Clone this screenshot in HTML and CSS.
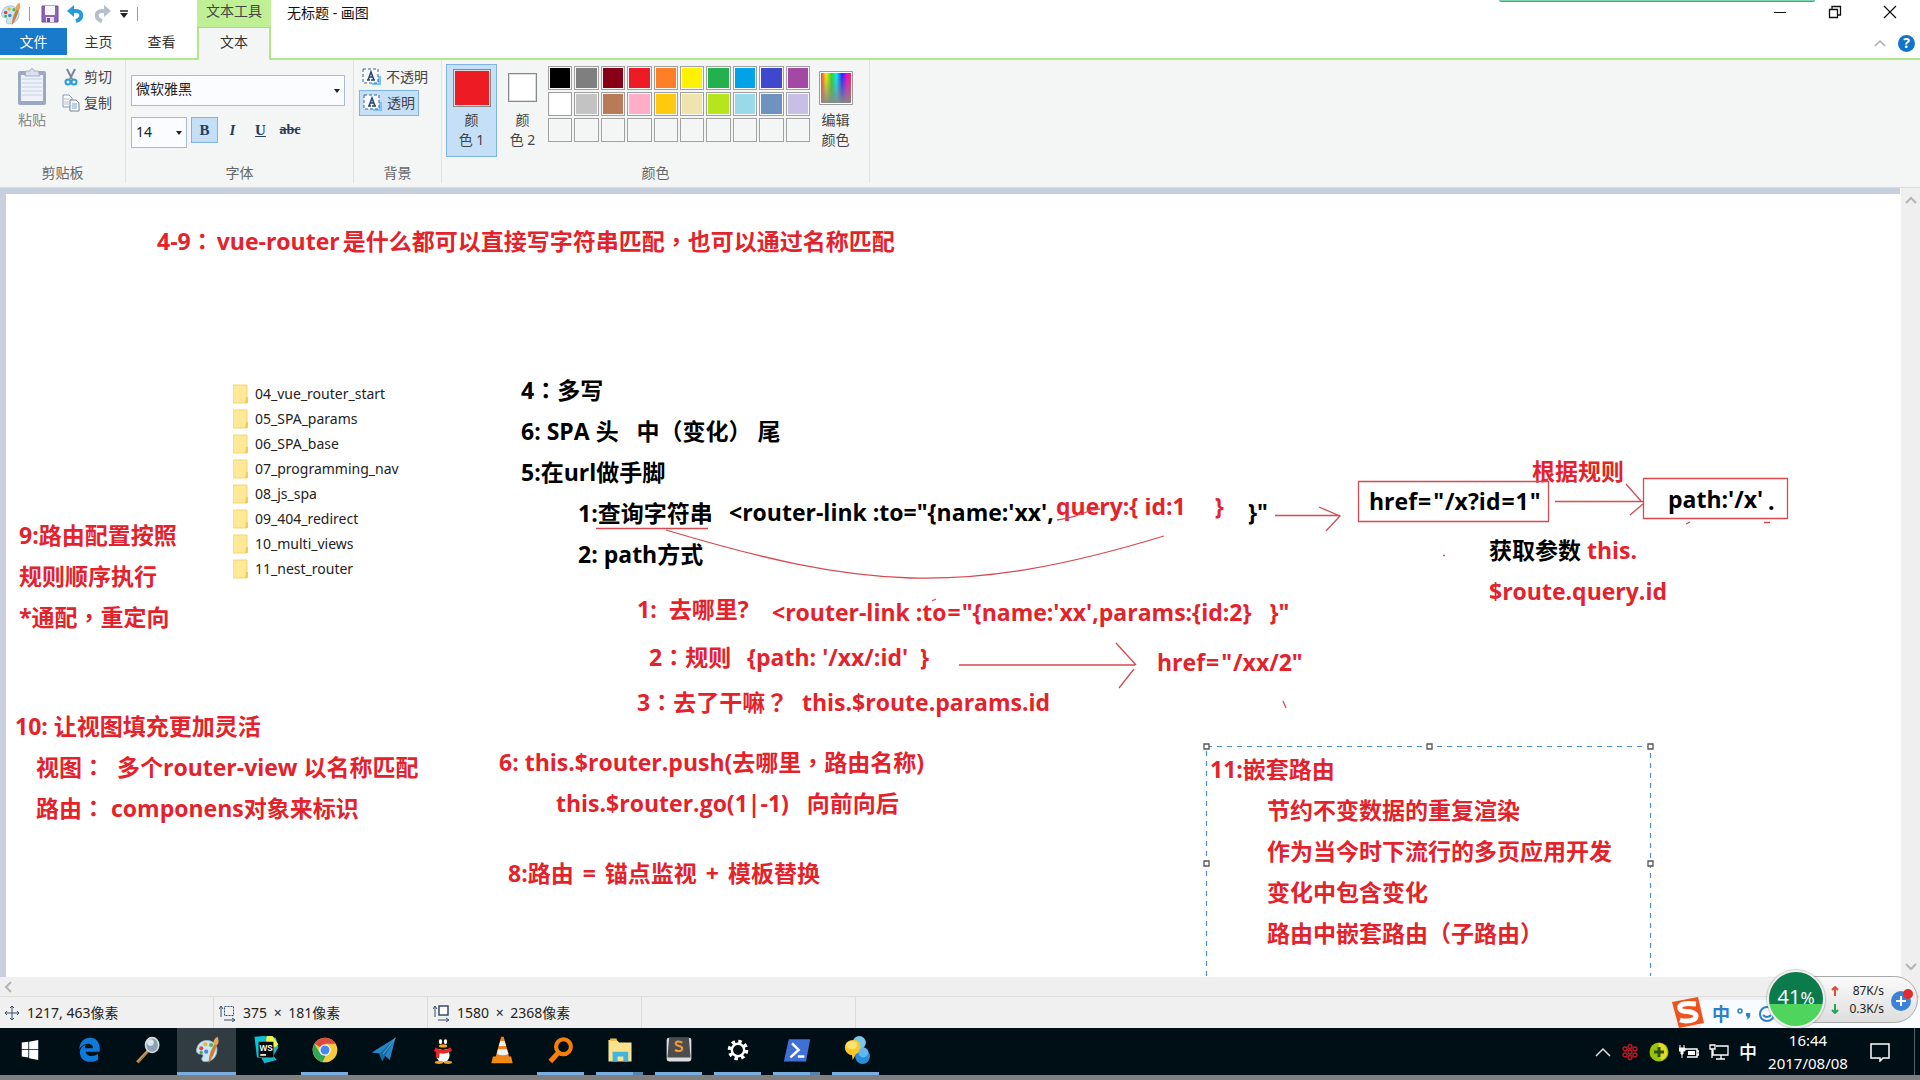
FILE: index.html
```html
<!DOCTYPE html>
<html lang="zh-CN">
<head>
<meta charset="utf-8">
<title>无标题 - 画图</title>
<link rel="stylesheet" href="styles.css">
</head>
<body>
<svg class="defs" aria-hidden="true">
  <defs>
    <linearGradient id="rainbow"><stop offset="0" stop-color="#f33"/><stop offset=".17" stop-color="#fe0"/><stop offset=".35" stop-color="#2d2"/><stop offset=".52" stop-color="#0ef"/><stop offset=".7" stop-color="#22f"/><stop offset=".87" stop-color="#f0c"/><stop offset="1" stop-color="#f24"/></linearGradient>
    <linearGradient id="fade" x2="0" y2="1"><stop offset="0" stop-color="#888" stop-opacity="0"/><stop offset="1" stop-color="#888" stop-opacity=".95"/></linearGradient>
    <symbol id="palette" viewBox="0 0 30 34">
      <path d="M3 14C5 7 12 4 19 6c6 2 9 7 8 13-1 8-8 13-16 12-3-1-3-4-1-6 1-2-1-3-3-3-4 0-6-3-4-8z" fill="#cde4f2" stroke="#8db3ca"/>
      <circle cx="8" cy="15" r="2.500" fill="#e0453b"/><circle cx="13" cy="10" r="2.500" fill="#efb52c"/><circle cx="8" cy="20" r="2" fill="#4ba84b"/><circle cx="14" cy="19" r="2.500" fill="#4389d5"/><circle cx="20" cy="11" r="2.500" fill="#5cb356"/>
      <path d="M17 33c0-9 3-17 7-23l3 1c-2 8-5 15-10 22z" fill="#cf7f35"/><path d="M23 10c-1-4 2-8 5-9 1 4 2 8-1 10z" fill="#e9a35d"/>
    </symbol>
    <symbol id="folder" viewBox="0 0 16 20"><path d="M0 1h14v18H0z" fill="#ffe896"/><path d="M0 1h14v18H0z" fill="none" stroke="#f1d675"/><path d="M13 13h2v6h-3z" fill="#f5cd55"/></symbol>
    <symbol id="textbox" viewBox="0 0 20 18"><path d="M10 8h9v9h-9z" fill="#7cc2ff"/><path d="M1 1h15v14H1z" fill="#f7fbff" stroke="#3e618b" stroke-dasharray="3 2"/><path d="M5 12h3M9 12h4M6 12l3-8 3 8M7 9h4" stroke="#25466e" stroke-width="1.500" fill="none"/></symbol>
    <symbol id="size" viewBox="0 0 18 18"><path d="M2 13V3M0 5l2-3 2 3M5 16h10M13 14l3 2-3 2" fill="none" stroke="#344e6d"/></symbol>
  </defs>
</svg>

<header class="titlebar">
  <div class="quick">
    <svg class="app-icon" viewBox="0 0 30 34"><use href="#palette"/></svg>
    <i class="bar"></i>
    <button aria-label="保存"><svg width="18" height="18" viewBox="0 0 18 18"><path d="M1 1h16v16H1z" fill="#8d65b2" stroke="#704b94"/><path d="M4 1h10v9H4z" fill="#f7f4fa"/><path d="M5 12h8v5H5z" fill="#e7dfef"/><path d="M6 13h3v4H6z" fill="#6e4c8e"/></svg></button>
    <button aria-label="撤消"><svg width="18" height="18" viewBox="0 0 18 18"><path d="M4 6h5c7 0 7 8 0 10" fill="none" stroke="#269bda" stroke-width="4"/><path d="M0 6l7-6v12z" fill="#269bda"/></svg></button>
    <button aria-label="重做"><svg width="18" height="18" viewBox="0 0 18 18"><path d="M14 6H9c-7 0-7 8 0 10" fill="none" stroke="#b5bfce" stroke-width="4"/><path d="M18 6l-7-6v12z" fill="#b5bfce"/></svg></button>
    <button aria-label="自定义快速访问工具栏"><svg width="10" height="8" viewBox="0 0 10 8"><path d="M1 1h8" stroke="#222" stroke-width="1.500"/><path d="M1 3h8L5 8z" fill="#222"/></svg></button>
    <i class="bar"></i>
  </div>
  <div class="context-title">文本工具</div>
  <h1 class="title">无标题 - 画图</h1>
  <div class="window-buttons">
    <button aria-label="最小化"><svg width="14" height="14" viewBox="0 0 14 14"><path d="M1 7.500h12" stroke="#111"/></svg></button>
    <button aria-label="还原"><svg width="14" height="14" viewBox="0 0 14 14"><path d="M1.500 4.500h8v8h-8zM4 4V1.500h8.500V10H10" fill="none" stroke="#111" stroke-width="1.300"/></svg></button>
    <button aria-label="关闭"><svg width="14" height="14" viewBox="0 0 14 14"><path d="M1 1l12 12M13 1L1 13" stroke="#111" stroke-width="1.200"/></svg></button>
  </div>
  <div class="share-strip"></div>
</header>

<nav class="tabs">
  <a class="tab file" href="#file">文件</a>
  <a class="tab" href="#home">主页</a>
  <a class="tab" href="#view">查看</a>
  <a class="tab current" href="#text">文本</a>
  <div class="tab-tools">
    <button aria-label="折叠功能区"><svg width="12" height="8" viewBox="0 0 12 8"><path d="M1 7l5-5 5 5" fill="none" stroke="#aaa" stroke-width="1.500"/></svg></button>
    <button class="help" aria-label="帮助">?</button>
  </div>
</nav>

<section class="ribbon">
  <div class="group clipboard">
    <div class="group-body">
      <button class="paste"><svg width="30" height="38" viewBox="0 0 30 38"><rect x="1" y="3" width="28" height="34" rx="2" fill="#9aa8c2"/><path d="M4 7h22v26H4z" fill="#eef2fa"/><path d="M5 11h20M5 15h20M5 19h20M5 23h20M5 27h20" stroke="#c5d0e3"/><path d="M9 3h4c0-3 4-3 4 0h4l2 5H8z" fill="#dbe1ec" stroke="#a3afc4"/></svg>粘贴</button>
      <div class="stack">
        <button class="tool"><svg width="18" height="18" viewBox="0 0 18 18"><path d="M5 1l5 10M13 1L8 11" stroke="#7a8794" stroke-width="2"/><circle cx="6" cy="14" r="2.500" fill="none" stroke="#2f9ad8" stroke-width="2"/><circle cx="12" cy="14" r="2.500" fill="none" stroke="#2f9ad8" stroke-width="2"/></svg>剪切</button>
        <button class="tool"><svg width="18" height="18" viewBox="0 0 18 18"><path d="M1 1h6l3 3v9H1z" fill="#fff" stroke="#8a98a8"/><path d="M2 5h5M2 8h5M2 10h5" stroke="#a9c0d8"/><path d="M8 6h6l3 3v8H8z" fill="#fff" stroke="#708090"/><path d="M10 10h5M10 12h5M10 14h5" stroke="#71a3d6"/></svg>复制</button>
      </div>
    </div>
    <h2>剪贴板</h2>
  </div>
  <div class="group font">
    <div class="group-body">
      <label class="combo family"><select aria-label="字体"><option>微软雅黑</option></select></label>
      <div class="format">
        <label class="combo points"><select aria-label="字号"><option>14</option></select></label>
        <button class="on" aria-label="加粗">B</button>
        <button class="italic" aria-label="倾斜">I</button>
        <button class="underline" aria-label="下划线">U</button>
        <button class="strike" aria-label="删除线">abc</button>
      </div>
    </div>
    <h2>字体</h2>
  </div>
  <div class="group background">
    <div class="group-body">
      <button class="tool"><svg width="20" height="18"><use href="#textbox"/></svg>不透明</button>
      <button class="tool on"><svg width="20" height="18"><use href="#textbox"/></svg>透明</button>
    </div>
    <h2>背景</h2>
  </div>
  <div class="group colors">
    <div class="group-body">
      <button class="color-button on"><span class="swatch-box"><i class="swatch large"></i></span>颜<br>色 1</button>
      <button class="color-button"><span class="swatch-box"><i class="swatch small"></i></span>颜<br>色 2</button>
      <div class="palette">
        <button class="c1" aria-label="黑色"></button><button class="c2" aria-label="灰色-50%"></button><button class="c3" aria-label="深红色"></button><button class="c4" aria-label="红色"></button><button class="c5" aria-label="橙色"></button><button class="c6" aria-label="黄色"></button><button class="c7" aria-label="绿色"></button><button class="c8" aria-label="青绿"></button><button class="c9" aria-label="靛青"></button><button class="c10" aria-label="紫色"></button>
        <button class="c11" aria-label="白色"></button><button class="c12" aria-label="灰色-25%"></button><button class="c13" aria-label="褐色"></button><button class="c14" aria-label="玫瑰色"></button><button class="c15" aria-label="金色"></button><button class="c16" aria-label="浅黄色"></button><button class="c17" aria-label="酸橙色"></button><button class="c18" aria-label="淡青绿色"></button><button class="c19" aria-label="蓝灰色"></button><button class="c20" aria-label="淡紫色"></button>
        <button></button><button></button><button></button><button></button><button></button><button></button><button></button><button></button><button></button><button></button>
      </div>
      <button class="color-button edit"><span class="swatch-box"><svg width="34" height="34" viewBox="0 0 34 34"><path d="M.5.5h33v33H.5z" fill="#fff" stroke="#999"/><path d="M2 2h30v30H2z" fill="url(#rainbow)"/><path d="M2 2h30v30H2z" fill="url(#fade)"/></svg></span>编辑<br>颜色</button>
    </div>
    <h2>颜色</h2>
  </div>
</section>

<main class="workspace">
  <div class="canvas">
    <p class="note red n-title">4-9<span class="w" lang="zh-TW">：</span><span class="sum">vue-router</span>是什么都可以直接写字符串匹配<span class="w" lang="zh-TW">，</span>也可以通过名称匹配</p>

    <ul class="folders">
      <li><svg><use href="#folder"/></svg>04_vue_router_start</li>
      <li><svg><use href="#folder"/></svg>05_SPA_params</li>
      <li><svg><use href="#folder"/></svg>06_SPA_base</li>
      <li><svg><use href="#folder"/></svg>07_programming_nav</li>
      <li><svg><use href="#folder"/></svg>08_js_spa</li>
      <li><svg><use href="#folder"/></svg>09_404_redirect</li>
      <li><svg><use href="#folder"/></svg>10_multi_views</li>
      <li><svg><use href="#folder"/></svg>11_nest_router</li>
    </ul>

    <div class="note n-main"><p>4<span class="w" lang="zh-TW">：</span>多写</p><p>6: SPA 头   中<span class="w" lang="zh-TW">（</span>变化<span class="w" lang="zh-TW">）</span> 尾</p><p>5:在url做手脚</p><p class="in">1:查询字符串</p><p class="in">2: path方式</p></div>
    <p class="note n-link">&lt;router-link :to="{name:'xx',</p>
    <p class="note n-link-end">}"</p>
    <p class="note red n-query">query:{ <span>id:1</span><span class="brace">}</span></p>

    <p class="note red n-rule">根据规则</p>
    <p class="note n-href">href<span class="op">=</span><span class="op">"</span>/x?id<span class="op">=</span>1<span class="op">"</span></p>
    <p class="note n-path">path:'/x'</p>
    <p class="note n-dot">.</p>
    <div class="note n-get"><p>获取参数 <span class="red">this.</span></p><p class="red">$route.query.id</p></div>

    <p class="note red n-where">1:  去哪里?</p>
    <p class="note red n-params">&lt;router-link :to<span class="op">=</span>"{name:'xx',params:{id:2}   }"</p>
    <p class="note red n-second">2<span class="w" lang="zh-TW">：</span>规则</p>
    <p class="note red n-rule-path">{path: '/xx/:id'  }</p>
    <p class="note red n-xx">href<span class="op">=</span><span class="op">"</span>/xx/2"</p>
    <p class="note red n-third">3<span class="w" lang="zh-TW">：</span>去了干嘛<span class="w" lang="zh-TW">？</span></p>
    <p class="note red n-this">this.$route.params.id</p>

    <div class="note red n-push"><p>6: this.$router.push(去哪里<span class="w" lang="zh-TW">，</span>路由名称)</p><p class="in">this.$router.go(1|-1)   向前向后</p></div>
    <p class="note red n-eight">8:路由 <span class="sum">=</span> 锚点监视 <span class="sum">+</span> 模板替换</p>

    <div class="note red n-nine"><p>9:路由配置按照</p><p>规则顺序执行</p><p>*通配<span class="w" lang="zh-TW">，</span>重定向</p></div>
    <div class="note red n-ten"><p>10: 让视图填充更加灵活</p><p class="sub">视图<span class="w" lang="zh-TW">：</span>  多个router-view 以名称匹配</p><p class="sub">路由<span class="w" lang="zh-TW">：</span> componens对象来标识</p></div>

    <div class="note red n-nest"><p>11:嵌套路由</p><p class="in">节约不变数据的重复渲染</p><p class="in">作为当今时下流行的多页应用开发</p><p class="in">变化中包含变化</p><p class="in">路由中嵌套路由<span class="w" lang="zh-TW">（</span>子路由<span class="w" lang="zh-TW">）</span></p></div>

    <svg class="ink" width="1894" height="783" viewBox="6 194 1894 783">
      <g fill="none" stroke="#d64a50" stroke-width="1.300">
        <path d="M596 528.500h112M666 530C860 588 960 598 1164 536M1057 520q20-3 34-10l9-1"/>
        <path d="M1275 515.500h65M1319 507l21 9-14 15"/>
        <path d="M959 665h176M1116 643l20 22M1134 669l-15 19"/>
        <path d="M1358.500 481.500h190v40h-190zM1643.500 478.500h144v40h-144z"/>
        <path d="M1555 501.500h88M1626 484l15 17M1643 504l-13 11"/>
        <path d="M932 601l4-2M1283 701l3 7M1443 555.500h2M1686 524l4-2M1764 522.500h6"/>
      </g>
      <path d="M1206.500 976V746.500H1650.500V976" fill="none" stroke="#4a90d9" stroke-width="1.200" stroke-dasharray="5 5"/>
      <g fill="#fff" stroke="#555" stroke-width="1.300"><path d="M1204 744h5v5h-5zM1427 744h5v5h-5zM1648 744h5v5h-5zM1204 861h5v5h-5zM1648 861h5v5h-5z"/></g>
    </svg>
  </div>
  <div class="vscroll">
    <button aria-label="向上滚动"><svg width="12" height="8" viewBox="0 0 12 8"><path d="M1 7l5-5 5 5" fill="none" stroke="#b5b5b5" stroke-width="2"/></svg></button>
    <button aria-label="向下滚动"><svg width="12" height="8" viewBox="0 0 12 8"><path d="M1 1l5 5 5-5" fill="none" stroke="#b5b5b5" stroke-width="2"/></svg></button>
  </div>
</main>
<div class="hscroll"><button aria-label="向左滚动"><svg width="8" height="12" viewBox="0 0 8 12"><path d="M7 1L2 6l5 5" fill="none" stroke="#b5b5b5" stroke-width="2"/></svg></button></div>

<footer class="status">
  <div><svg width="14" height="14" viewBox="0 0 14 14"><path d="M7 0v14M0 7h14M5 2l2-2 2 2M5 12l2 2 2-2M2 5L0 7l2 2M12 5l2 2-2 2" fill="none" stroke="#344e6d"/></svg><span>1217, 463像素</span></div>
  <div><svg width="18" height="18" viewBox="0 0 18 18"><use href="#size"/><path d="M5.500 2.500h9v9h-9z" fill="none" stroke="#344e6d" stroke-dasharray="2 1"/></svg><span>375 <span class="sum">×</span> 181像素</span></div>
  <div><svg width="18" height="18" viewBox="0 0 18 18"><use href="#size"/><path d="M6 2h9v9H6z" fill="#fff" stroke="#344e6d" stroke-width="1.500"/></svg><span>1580 <span class="sum">×</span> 2368像素</span></div>
  <div></div>
</footer>

<footer class="taskbar">
  <div class="apps">
    <button aria-label="开始"><svg viewBox="0 0 34 34"><path d="M7 8l8-1v9H7zM16 7l11-2v11H16zM7 17h8v9l-8-1zM16 17h11v12l-11-2z" fill="#fff"/></svg></button>
    <button aria-label="Edge"><svg viewBox="0 0 34 34"><path d="M5 16C6 7 11 2 18 2c8 0 12 6 12 13v4H13c1 6 9 7 15 3v7c-10 5-22 2-22-9 0-5 3-8 8-10-2 2-2 3-2 5h10c0-7-11-8-17 1z" fill="#0c7bd9"/></svg></button>
    <button aria-label="搜索工具"><svg viewBox="0 0 34 34"><path d="M4 32L18 17" stroke="#a97b45" stroke-width="4"/><path d="M4 31L17 17" stroke="#e0bb83"/><ellipse cx="22" cy="11" rx="8" ry="9" fill="#8ba2b3" stroke="#d6dee4" stroke-width="2"/><ellipse cx="20" cy="8" rx="4" ry="4" fill="#d8e5ec"/></svg></button>
    <button class="active" aria-label="画图"><svg viewBox="0 0 30 34"><use href="#palette"/></svg></button>
    <button aria-label="WebStorm"><svg viewBox="0 0 34 34"><path d="M3 1l12-1 4 5-5 22-8-1z" fill="#08c4d7"/><path d="M15 0l14 2 3 12-6 10 4 5-15 4-5-9z" fill="#1bb5c8"/><path d="M18 0h7l7 10-4 4-11-8z" fill="#eff24d"/><path d="M8 7h18v19H8z" fill="#050505"/><path d="M10 23h7" stroke="#fff" stroke-width="2"/><text x="9" y="18" font-size="10" font-weight="700" fill="#fff" font-family="Liberation Sans">WS</text></svg></button>
    <button class="run" aria-label="Chrome"><svg viewBox="0 0 34 34"><circle cx="17" cy="17" r="15" fill="#f8cb3c"/><path d="M17 17L4 9.500A15 15 0 0 1 30 9.500H17z" fill="#db4b3f"/><path d="M4 9.500l8 13 6 1-4 8A15 15 0 0 1 4 9.500z" fill="#2fa75b"/><circle cx="17" cy="17" r="7" fill="#fff"/><circle cx="17" cy="17" r="5.500" fill="#4688f1"/></svg></button>
    <button aria-label="飞机"><svg viewBox="0 0 34 34"><path d="M2 20L31 2 24 29l-8-7z" fill="#2785c4"/><path d="M31 2L11 22l4 9 3-6" fill="#176ba5"/><path d="M31 2L16 22" stroke="#6bb5e1"/></svg></button>
    <button aria-label="QQ"><svg viewBox="0 0 34 34"><ellipse cx="17" cy="20" rx="10" ry="12" fill="#161616"/><ellipse cx="17" cy="23" rx="8" ry="9" fill="#fff"/><circle cx="17" cy="9" r="8" fill="#111"/><ellipse cx="14" cy="7" rx="2" ry="3" fill="#fff"/><ellipse cx="20" cy="7" rx="2" ry="3" fill="#fff"/><ellipse cx="17" cy="12" rx="5" ry="2" fill="#f3a51c"/><path d="M8 14q9 6 18 0l2 4q-8 5-15 3l-1 6-4-1 1-6-3-2z" fill="#e32828"/><ellipse cx="12" cy="32" rx="5" ry="2" fill="#eda020"/><ellipse cx="23" cy="32" rx="5" ry="2" fill="#eda020"/></svg></button>
    <button aria-label="VLC"><svg viewBox="0 0 34 34"><path d="M6 25h22l2 8H4z" fill="#f08a13"/><path d="M16 1h3l7 25q-8 5-17 0z" fill="#f28318"/><path d="M15 6h5l2 6h-9zM12 16h11l2 6q-7 3-14 0z" fill="#f1f1f1"/></svg></button>
    <button class="run" aria-label="Everything"><svg viewBox="0 0 34 34"><circle cx="20" cy="13" r="9" fill="none" stroke="#f77f08" stroke-width="5"/><path d="M14 20L4 31" stroke="#f77f08" stroke-width="6"/></svg></button>
    <button class="run multi" aria-label="文件资源管理器"><svg viewBox="0 0 34 34"><path d="M3 5h10l3 3h15v23H3z" fill="#fbe28d"/><path d="M5 3h8v3H5z" fill="#f0bd3c"/><path d="M8 31V19h19v12h-6v-6h-7v6z" fill="#40b3df"/></svg></button>
    <button class="run" aria-label="Sublime Text"><svg viewBox="0 0 34 34"><rect x="2" y="2" width="30" height="29" rx="3" fill="#ddd"/><path d="M5 2h24l2 24H3z" fill="#4d4d4d"/><path d="M21 8q-8-3-8 1c0 4 8 2 8 6s-5 4-9 2" fill="none" stroke="#f49a35" stroke-width="2.500"/></svg></button>
    <button class="run" aria-label="设置"><svg viewBox="0 0 34 34"><circle cx="17" cy="17" r="10" fill="none" stroke="#fff" stroke-width="5" stroke-dasharray="4 3.854"/><circle cx="17" cy="17" r="7.500" fill="none" stroke="#fff" stroke-width="3"/></svg></button>
    <button class="run multi" aria-label="PowerShell"><svg viewBox="0 0 34 34"><path d="M7 4h26l-5 27H1z" fill="#3f70d5"/><path d="M11 9l8 8-10 9M18 25h8" fill="none" stroke="#fff" stroke-width="3"/></svg></button>
    <button class="run" aria-label="联系人"><svg viewBox="0 0 34 34"><circle cx="21" cy="8" r="8" fill="#7cc6ed"/><circle cx="25" cy="25" r="9" fill="#268edb"/><circle cx="26" cy="20" r="6" fill="#61b8ef"/><path d="M14 5C5 5 1 13 5 19c2 3 5 4 7 4l1 6 4-7c7-2 8-17-3-17z" fill="#ffc526"/><ellipse cx="12" cy="11" rx="7" ry="5" fill="#ffe26b"/></svg></button>
  </div>
  <div class="tray">
    <svg width="16" height="10" viewBox="0 0 16 10"><path d="M1 9l7-7 7 7" fill="none" stroke="#ddd" stroke-width="1.500"/></svg>
    <svg width="18" height="18" viewBox="0 0 18 18"><g fill="none" stroke="#c71920" stroke-width="1.300"><circle cx="9" cy="9" r="2"/><circle cx="9" cy="3.500" r="2"/><circle cx="14" cy="6" r="2"/><circle cx="14" cy="12" r="2"/><circle cx="9" cy="14.500" r="2"/><circle cx="4" cy="12" r="2"/><circle cx="4" cy="6" r="2"/></g></svg>
    <svg width="20" height="20" viewBox="0 0 20 20"><circle cx="10" cy="10" r="9.500" fill="#9bc20b"/><path d="M10 1a9 9 0 0 1 3 17L8 12z" fill="#e6d922"/><path d="M10 5v10M5 10h10" stroke="#27520b" stroke-width="3"/></svg>
    <svg width="20" height="14" viewBox="0 0 20 14"><path d="M6 4h12v8H8M18 6h2v4h-2" fill="none" stroke="#fff" stroke-width="1.500"/><path d="M9 6h7v4H9z" fill="#fff"/><path d="M1 0v3M5 0v3M0 3h6v3H4v3H2V6H0zM3 9v4" fill="#fff" stroke="#fff"/></svg>
    <svg width="20" height="16" viewBox="0 0 20 16"><path d="M7 2h12v9H4V6M12 11v4M7 15h9M1 1h5v4H1zM3 5v9" fill="none" stroke="#fff" stroke-width="1.300"/></svg>
    <span class="ime">中</span>
    <div class="clock"><time>16:44</time><time>2017/08/08</time></div>
    <button class="notice" aria-label="通知"><svg width="20" height="20" viewBox="0 0 20 20"><path d="M1 2h18v14h-6l-3 3v-3H1z" fill="none" stroke="#fff" stroke-width="1.500"/></svg></button>
    <i class="desktop"></i>
  </div>

  <div class="ime-bar">
    <svg class="sogou" width="34" height="32" viewBox="0 0 34 32"><path d="M1 6L27 1l6 26-25 5z" fill="#f0521d"/><path d="M25 8Q7 6 9 13c1 4 16 1 16 7 0 5-10 6-16 4" fill="none" stroke="#fff" stroke-width="5"/></svg>
    <b>中</b>
    <svg width="14" height="14" viewBox="0 0 14 14"><circle cx="3" cy="4" r="2" fill="none" stroke="#2c7fcd" stroke-width="1.500"/><path d="M9 6h4c1 4-1 6-4 7 2-2 2-3 0-4z" fill="#2c7fcd"/></svg>
    <svg width="18" height="18" viewBox="0 0 18 18"><circle cx="9" cy="9" r="7" fill="none" stroke="#2c7fcd" stroke-width="2"/><path d="M5 10q4 4 8 0" fill="none" stroke="#2c7fcd" stroke-width="2"/></svg>
  </div>
  <div class="net">
    <div class="ball">41<small>%</small></div>
    <div class="arrows"><svg width="8" height="10" viewBox="0 0 8 10"><path d="M4 10V1M1 4l3-3 3 3" fill="none" stroke="#e5493a" stroke-width="2"/></svg><svg width="8" height="10" viewBox="0 0 8 10"><path d="M4 0v9M1 6l3 3 3-3" fill="none" stroke="#27a455" stroke-width="2"/></svg></div>
    <div class="rates"><span>87K/s</span><span>0.3K/s</span></div>
    <svg width="24" height="24" viewBox="0 0 24 24"><circle cx="11" cy="13" r="10" fill="#3b83d9"/><path d="M11 8v10M6 13h10" stroke="#fff" stroke-width="2"/><circle cx="18" cy="6" r="5" fill="#e22b2b"/></svg>
  </div>
</footer>
</body>
</html>
```
FILE: styles.css
```css
* { box-sizing: border-box; }
body {
  margin: 0;
  min-height: 100vh;
  display: flex;
  flex-direction: column;
  overflow: hidden;
  background: #fff;
  border-bottom: 5px solid #808080;
  font: 14px/20px "Noto Sans", "Noto Sans CJK SC", sans-serif;
  color: #444;
}
p, h1, h2, ul { margin: 0; padding: 0; font-weight: inherit; }
svg { display: block; flex: none; }
button { border: 0; padding: 0; margin: 0; background: none; font: inherit; color: inherit; display: flex; align-items: center; justify-content: center; }
.defs { position: absolute; width: 0; height: 0; }

.titlebar { display: flex; height: 28px; position: relative; }
.quick { width: 197px; display: flex; align-items: center; gap: 8px; }
.app-icon { width: 21px; height: 24px; }
.bar { width: 1px; height: 14px; background: #999; }
.quick .bar { flex: none; }
.app-icon + .bar { margin-right: 3px; }
.context-title { width: 74px; height: 28px; background: #c0f095; border-bottom: 1px solid #a0e070; text-align: center; line-height: 22px; }
.title { flex: 1; margin-left: 16px; font-size: 14px; line-height: 26px; color: #111; }
.window-buttons { display: flex; padding-right: 3px; }
.window-buttons button { width: 55px; height: 24px; }
.share-strip { position: absolute; top: 0; right: 105px; width: 316px; height: 2px; background: #7fd4b0; border-bottom: 1px solid #4ca283; border-radius: 0 0 3px 3px; }

.tabs { display: flex; height: 32px; border-bottom: 2px solid #b0e788; }
.tab { width: 63px; height: 28px; line-height: 27px; text-align: center; color: #333; text-decoration: none; }
.tab.file { width: 67px; background: #1979ca; color: #fff; height: 27px; }
.tab.current { width: 74px; height: 32px; margin-left: 4px; background: #f4f6f6; border: 2px solid #b0e788; border-width: 0 2px; }
.tab-tools { margin-left: auto; display: flex; align-items: center; gap: 12px; padding-right: 5px; }
.help { width: 17px; height: 17px; border-radius: 9px; background: #0f74ca; color: #fff; font-weight: 700; }

.ribbon { display: flex; height: 128px; background: #f4f6f6; border-bottom: 1px solid #d8dce0; }
.group { display: flex; flex-direction: column; padding-top: 4px; position: relative; border-right: 1px solid #dfe2e4; margin: 0 0 4px; }
.group-body { flex: 1; }
.group h2 { text-align: center; font-size: 14px; line-height: 20px; color: #666; }
.clipboard { width: 126px; }
.clipboard .group-body { display: flex; gap: 11px; padding-left: 17px; }
.paste { flex-direction: column; justify-content: flex-start; padding-top: 4px; gap: 4px; color: #888; }
.stack { display: flex; flex-direction: column; }
.tool { height: 26px; gap: 4px; padding: 0 4px; }
.font { width: 228px; }
.font .group-body { padding: 11px 8px 0 5px; }
.combo { display: block; position: relative; }
.combo select { appearance: none; width: 100%; height: 31px; border: 1px solid #abbad4; background: #fafcff; padding: 0 4px 3px; font: inherit; color: #222; border-radius: 0; }
.combo::after { content: ""; position: absolute; right: 5px; top: 14px; border: 3px solid transparent; border-top: 4px solid #222; border-bottom: 0; }
.points { width: 56px; margin-right: 4px; }
.format { display: flex; margin-top: 11px; font: 700 15px/20px "Liberation Serif", serif; color: #263c5c; }
.combo.points select { font: 14px "Noto Sans", sans-serif; }
.format button { width: 27px; height: 26px; margin-right: 1px; }
button.on { background: #c5dff6; border: 1px solid #7fb2e5; }
.italic { font-style: italic; }
.underline { text-decoration: underline; }
.format .strike { width: 30px; font-size: 14px; text-decoration: line-through; }
.background { width: 88px; }
.background .group-body { padding-left: 5px; }
.background .tool { padding: 0 3px; gap: 4px; }

.colors { width: 428px; }
.colors .group-body { display: flex; align-items: flex-start; padding-left: 4px; }
.color-button { display: block; width: 51px; height: 93px; padding-bottom: 6px; border: 1px solid transparent; text-align: center; line-height: 20px; }
.swatch-box { display: flex; height: 44px; align-items: center; justify-content: center; }
.swatch { border: 1px solid #888; box-shadow: inset 0 0 0 1px #ddd; }
.swatch.large { width: 38px; height: 38px; background: #ed1c24; }
.swatch.small { width: 29px; height: 29px; background: #fff; }
.palette { width: 262px; margin: 2px 0 0; display: grid; grid-template-columns: repeat(10, 1fr); grid-auto-rows: 24px; gap: 2px; }
.palette button { border: 1px solid #a0a0a0; box-shadow: inset 0 0 0 1px #f8f8f8; }
.c1 { background: #000; } .c2 { background: #7f7f7f; } .c3 { background: #880015; } .c4 { background: #ed1c24; } .c5 { background: #ff7f27; }
.c6 { background: #fff200; } .c7 { background: #22b14c; } .c8 { background: #00a2e8; } .c9 { background: #3f48cc; } .c10 { background: #a349a4; }
.c11 { background: #fff; } .c12 { background: #c3c3c3; } .c13 { background: #b97a57; } .c14 { background: #ffaec9; } .c15 { background: #ffc90e; }
.c16 { background: #efe4b0; } .c17 { background: #b5e61d; } .c18 { background: #99d9ea; } .c19 { background: #7092be; } .c20 { background: #c8bfe7; }

.workspace { flex: 1; display: flex; border: solid #c8d0e0; border-width: 6px 0 0 6px; }
.canvas { flex: 1; position: relative; overflow: hidden; background: #fff; }
.vscroll { width: 20px; margin-top: -6px; padding: 8px 0 6px; background: #efefef; display: flex; flex-direction: column; justify-content: space-between; align-items: center; border-left: 1px solid #fff; }
.hscroll { height: 19px; background: #efefef; padding: 4px; }

.note { position: absolute; white-space: pre; font: 700 23px/41px "Open Sans", "Noto Sans CJK SC", sans-serif; color: #000; }
.note.red, .red { color: #e4222b; }
/* full-width punctuation centred in its cell */
.w { font-family: "Noto Sans CJK TC", sans-serif; line-height: 1px; }
.op { padding: 0 1px; }
.sum { padding: 0 3px; }
.in { padding-left: 57px; }
.sub { padding-left: 21px; }
.folders { position: absolute; left: 227px; top: 187px; list-style: none; color: #222; }
.folders li { display: flex; align-items: center; gap: 6px; height: 25px; }
.folders svg { width: 16px; height: 20px; }
.n-title { left: 151px; top: 27px; }
.n-main { left: 515px; top: 176px; }
.n-link { left: 723px; top: 298px; }
.n-link-end { left: 1242px; top: 298px; }
.n-query { left: 1050px; top: 304px; line-height: 17px; height: 28px; overflow: hidden; }
.brace { padding-left: 29px; }
.n-rule { left: 1526px; top: 257px; }
.n-href { left: 1363px; top: 287px; }
.n-path { left: 1662px; top: 285px; }
.n-dot { left: 1762px; top: 287px; }
.n-get { left: 1483px; top: 336px; }
.n-where { left: 631px; top: 395px; }
.n-params { left: 766px; top: 398px; }
.n-second { left: 643px; top: 443px; }
.n-rule-path { left: 741px; top: 443px; }
.n-xx { left: 1151px; top: 448px; }
.n-third { left: 631px; top: 488px; }
.n-this { left: 796px; top: 488px; }
.n-push { left: 493px; top: 548px; }
.n-eight { left: 502px; top: 659px; }
.n-nine { left: 13px; top: 321px; }
.n-ten { left: 9px; top: 512px; }
.n-nest { left: 1204px; top: 555px; }
.ink { position: absolute; left: 0; top: 0; }

.status { display: flex; height: 32px; background: #f0f0f0; border-top: 1px solid #ddd; color: #222; }
.status div { width: 214px; border-right: 1px solid #dcdcdc; display: flex; align-items: center; gap: 6px; padding-left: 5px; }
.status div:first-child { gap: 8px; }

.taskbar { height: 47px; background: #000e16; display: flex; justify-content: space-between; position: relative; }
.apps { display: flex; }
.apps button { width: 59px; border-bottom: 3px solid transparent; background-clip: padding-box; }
.apps svg { width: 28px; height: 28px; }
.apps .active { background: #303b42; border-color: #78aee2; }
.apps .run { position: relative; }
.apps .run::after { content: ""; position: absolute; left: 6px; right: 6px; bottom: -3px; height: 3px; background: #78aee2; }
.apps .multi::after { border-right: 10px solid #5584ad; }
.tray { display: flex; align-items: center; gap: 10px; color: #fff; }
.ime { font-size: 18px; font-weight: 500; }
.clock { width: 82px; display: flex; flex-direction: column; align-items: center; font-size: 15px; line-height: 23px; }
.notice { margin-left: 11px; }
.desktop { width: 1px; height: 47px; background: #56616a; margin: 0 5px 0 14px; }

.ime-bar { position: absolute; right: 0; bottom: 47px; width: 249px; height: 28px; background: linear-gradient(90deg, transparent 30px, #f8fbff 30px); display: flex; align-items: center; gap: 7px; color: #2c7fcd; font-size: 18px; }
.sogou { margin-top: -4px; }
.net { position: absolute; right: 2px; bottom: 52px; width: 133px; height: 47px; border: 1px solid #aaa; border-radius: 24px; background: linear-gradient(#fafafa, #dedede); display: flex; align-items: center; padding: 0 3px 0 45px; color: #222; font-size: 12px; line-height: 18px; }
.ball { position: absolute; left: -19px; top: -7px; width: 58px; height: 58px; border-radius: 29px; border: 2px solid #eee; box-shadow: 0 0 2px #666; background: linear-gradient(#0c7b4c 60%, #4fd45d 60%); color: #fff; font-size: 20px; line-height: 50px; text-align: center; }
.ball small { font-size: 17px; }
.arrows { display: flex; flex-direction: column; gap: 8px; }
.rates { flex: 1; text-align: right; padding-right: 6px; display: flex; flex-direction: column; }
```
